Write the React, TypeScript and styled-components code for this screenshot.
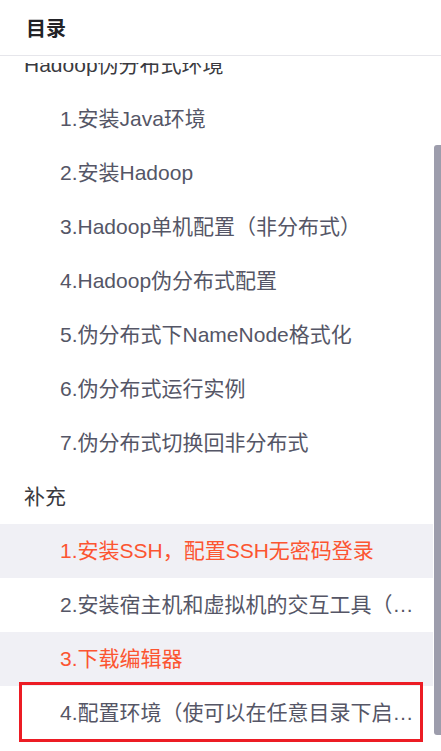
import styled, { createGlobalStyle } from "styled-components";

interface TocItem {
  text: string;
  level: 1 | 2;
  active?: boolean;
  marked?: boolean;
}

const items: TocItem[] = [
  { text: "Hadoop伪分布式环境", level: 1 },
  { text: "1.安装Java环境", level: 2 },
  { text: "2.安装Hadoop", level: 2 },
  { text: "3.Hadoop单机配置（非分布式）", level: 2 },
  { text: "4.Hadoop伪分布式配置", level: 2 },
  { text: "5.伪分布式下NameNode格式化", level: 2 },
  { text: "6.伪分布式运行实例", level: 2 },
  { text: "7.伪分布式切换回非分布式", level: 2 },
  { text: "补充", level: 1 },
  { text: "1.安装SSH，配置SSH无密码登录", level: 2, active: true },
  { text: "2.安装宿主机和虚拟机的交互工具（XShell、Xftp）", level: 2 },
  { text: "3.下载编辑器", level: 2, active: true },
  { text: "4.配置环境（使可以在任意目录下启动Hadoop）", level: 2, marked: true },
];

const GlobalStyle = createGlobalStyle`
  html, body {
    margin: 0;
    padding: 0;
    background: #ffffff;
  }
  body {
    font-family: "Liberation Sans", "Noto Sans CJK SC", sans-serif;
  }
`;

const Panel = styled.div`
  position: relative;
  width: 441px;
  height: 751px;
  display: flex;
  flex-direction: column;
  overflow: hidden;
  background: #ffffff;
`;

const Header = styled.div`
  flex: 0 0 55px;
  display: flex;
  align-items: center;
  padding-left: 26px;
  border-bottom: 1px solid #e6e6eb;
  font-size: 20px;
  font-weight: 700;
  color: #222226;
  background: #ffffff;
`;

const Viewport = styled.div`
  flex: 1;
  margin-top: 7px;
  overflow: hidden;
  padding-right: 8px;
`;

const List = styled.ul`
  list-style: none;
  margin: -25px 0 0;
  padding: 0;
`;

const Row = styled.li<{ $level: 1 | 2; $active?: boolean }>`
  position: relative;
  height: 54px;
  line-height: 54px;
  padding: 0 18px 0 ${(p) => (p.$level === 1 ? 24 : 60)}px;
  font-size: 21px;
  white-space: nowrap;
  overflow: hidden;
  text-overflow: ellipsis;
  color: ${(p) => (p.$active ? "#fc5531" : p.$level === 1 ? "#3a3a40" : "#555666")};
  background: ${(p) => (p.$active ? "#f0f0f5" : "transparent")};
`;

const LastRow = styled(Row)`
  overflow: visible;
`;

const Clip = styled.div`
  overflow: hidden;
  text-overflow: ellipsis;
  white-space: nowrap;
`;

const Mark = styled.div`
  position: absolute;
  top: -4px;
  bottom: -2px;
  left: 19px;
  right: 10px;
  border: 3px solid #ec1c24;
  pointer-events: none;
`;

const ScrollThumb = styled.div`
  position: absolute;
  top: 145px;
  right: 0;
  width: 7px;
  height: 590px;
  background: #9d9dac;
  border-radius: 3px 0 0 3px;
`;

export default function App() {
  return (
    <>
      <GlobalStyle />
      <Panel>
        <Header>目录</Header>
        <Viewport>
          <List>
            {items.map((item, i) =>
              item.marked ? (
                <LastRow key={i} $level={item.level} $active={item.active}>
                  <Clip>{item.text}</Clip>
                  <Mark />
                </LastRow>
              ) : (
                <Row key={i} $level={item.level} $active={item.active}>
                  {item.text}
                </Row>
              )
            )}
          </List>
        </Viewport>
        <ScrollThumb />
      </Panel>
    </>
  );
}
